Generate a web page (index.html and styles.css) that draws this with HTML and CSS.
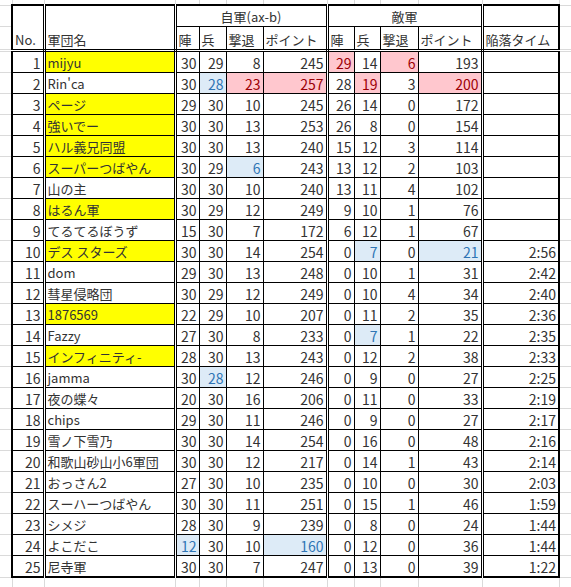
FILE: index.html
```html
<!DOCTYPE html>
<html lang="ja">
<head>
<meta charset="UTF-8">
<title>軍団成績</title>
<link rel="stylesheet" href="styles.css">
</head>
<body>
<table class="sheet">
  <colgroup>
    <col class="w-gap"><col class="w-no"><col class="w-name">
    <col class="w-a"><col class="w-b"><col class="w-c"><col class="w-d">
    <col class="w-e"><col class="w-f"><col class="w-g"><col class="w-h">
    <col class="w-time"><col class="w-gap2">
  </colgroup>
  <tr class="edge-top">
    <td class="gap"></td><td></td><td></td>
    <td></td><td></td><td></td><td></td>
    <td></td><td></td><td></td><td></td>
    <td></td><td class="gap"></td>
  </tr>
  <tr class="head1">
    <td class="gap"></td>
    <td rowspan="2" class="first sep bottom">No.</td>
    <td rowspan="2" class="sep bottom">軍団名</td>
    <td colspan="4" class="center sep">自軍(ax-b)</td>
    <td colspan="4" class="center sep">敵軍</td>
    <td class="last"></td>
    <td class="gap"></td>
  </tr>
  <tr class="head2">
    <td class="gap"></td>
    <td class="bottom">陣</td>
    <td class="bottom">兵</td>
    <td class="bottom">撃退</td>
    <td class="bottom sep">ポイント</td>
    <td class="bottom">陣</td>
    <td class="bottom">兵</td>
    <td class="bottom">撃退</td>
    <td class="bottom sep">ポイント</td>
    <td class="bottom last">陥落タイム</td>
    <td class="gap"></td>
  </tr>
  <tbody id="rows"></tbody>
  <tr class="edge-bottom">
    <td class="gap"></td><td></td><td></td>
    <td></td><td></td><td></td><td></td>
    <td></td><td></td><td></td><td></td>
    <td></td><td class="gap"></td>
  </tr>
</table>

<script>
// name, yellow?, [own 陣 兵 撃退 pt], [enemy 陣 兵 撃退 pt], time
// marks: "r" = red fill, "b" = blue fill
const data = [
  ['mijyu', 1, [30, 29, 8, 245], [29, 14, 6, 193], '', {e0: 'r', e2: 'r'}],
  ["Rin'ca", 0, [30, 28, 23, 257], [28, 19, 3, 200], '', {o1: 'b', o2: 'r', o3: 'r', e1: 'r', e3: 'r'}],
  ['ページ', 1, [29, 30, 10, 245], [26, 14, 0, 172], ''],
  ['強いでー', 1, [30, 30, 13, 253], [26, 8, 0, 154], ''],
  ['ハル義兄同盟', 1, [30, 30, 13, 240], [15, 12, 3, 114], ''],
  ['スーパーつばやん', 1, [30, 29, 6, 243], [13, 12, 2, 103], '', {o2: 'b'}],
  ['山の主', 0, [30, 30, 10, 240], [13, 11, 4, 102], ''],
  ['はるん軍', 1, [30, 29, 12, 249], [9, 10, 1, 76], ''],
  ['てるてるぼうず', 0, [15, 30, 7, 172], [6, 12, 1, 67], ''],
  ['デス スターズ', 1, [30, 30, 14, 254], [0, 7, 0, 21], '2:56', {e1: 'b', e3: 'b'}],
  ['dom', 0, [29, 30, 13, 248], [0, 10, 1, 31], '2:42'],
  ['彗星侵略団', 0, [30, 29, 12, 249], [0, 10, 4, 34], '2:40'],
  ['1876569', 1, [22, 29, 10, 207], [0, 11, 2, 35], '2:36'],
  ['Fazzy', 0, [27, 30, 8, 233], [0, 7, 1, 22], '2:35', {e1: 'b'}],
  ['インフィニティ-', 1, [28, 30, 13, 243], [0, 12, 2, 38], '2:33'],
  ['jamma', 0, [30, 28, 12, 246], [0, 9, 0, 27], '2:25', {o1: 'b'}],
  ['夜の蝶々', 0, [20, 30, 16, 206], [0, 11, 0, 33], '2:19'],
  ['chips', 0, [29, 30, 11, 246], [0, 9, 0, 27], '2:17'],
  ['雪ノ下雪乃', 0, [30, 30, 14, 254], [0, 16, 0, 48], '2:16'],
  ['和歌山砂山小6軍団', 0, [30, 30, 12, 217], [0, 14, 1, 43], '2:14'],
  ['おっさん2', 0, [27, 30, 10, 235], [0, 10, 0, 30], '2:03'],
  ['スーハーつばやん', 0, [30, 30, 11, 251], [0, 15, 1, 46], '1:59'],
  ['シメジ', 0, [28, 30, 9, 239], [0, 8, 0, 24], '1:44'],
  ['よこだこ', 0, [12, 30, 10, 160], [0, 12, 0, 36], '1:44', {o0: 'b', o3: 'b'}],
  ['尼寺軍', 0, [30, 30, 7, 247], [0, 13, 0, 39], '1:22']
];

const body = document.getElementById('rows');

function cell(text, cls) {
  const td = document.createElement('td');
  td.className = cls;
  td.textContent = text;
  return td;
}

data.forEach((row, i) => {
  const [name, yellow, own, enemy, time, marks = {}] = row;
  const tr = document.createElement('tr');
  tr.className = 'data';
  tr.appendChild(cell('', 'gap'));
  tr.appendChild(cell(i + 1, 'num first sep'));
  tr.appendChild(cell(name, 'name sep' + (yellow ? ' yellow' : '')));
  own.forEach((v, j) => {
    let cls = 'num';
    if (j === 3) cls += ' sep';
    if (marks['o' + j] === 'r') cls += ' red';
    if (marks['o' + j] === 'b') cls += ' blue';
    tr.appendChild(cell(v, cls));
  });
  enemy.forEach((v, j) => {
    let cls = 'num';
    if (j === 3) cls += ' sep';
    if (marks['e' + j] === 'r') cls += ' red';
    if (marks['e' + j] === 'b') cls += ' blue';
    tr.appendChild(cell(v, cls));
  });
  tr.appendChild(cell(time, 'num last'));
  tr.appendChild(cell('', 'gap'));
  body.appendChild(tr);
});
</script>
</body>
</html>
```

FILE: styles.css
```css
html, body {
    margin: 0;
    padding: 0;
    background: #ffffff;
}

body {
    font-family: "Noto Sans CJK JP", "Noto Sans", sans-serif;
    font-size: 13px;
    color: #333;
    overflow: hidden;
}

.sheet {
    border-collapse: collapse;
    table-layout: fixed;
    width: 571px;
}

.w-gap { width: 12px; }
.w-no { width: 32px; }
.w-name { width: 131px; }
.w-a { width: 24px; }
.w-b { width: 27px; }
.w-c { width: 37px; }
.w-d { width: 64px; }
.w-e { width: 27px; }
.w-f { width: 26px; }
.w-g { width: 38px; }
.w-h { width: 64px; }
.w-time { width: 77px; }
.w-gap2 { width: 12px; }

.sheet td {
    border: 1px solid #000;
    padding: 0 2px 1px 2px;
    line-height: 17px;
    vertical-align: bottom;
    white-space: nowrap;
    overflow: hidden;
    text-align: left;
}

/* excel gridlines outside the table */
.sheet td.gap,
.edge-top td,
.edge-bottom td {
    border-color: #dadada;
}

.edge-top td {
    height: 4px;
    padding: 0;
    border-top: none;
    border-bottom: 2px solid #000;
}

.edge-top td.gap {
    border-bottom: 1px solid #dadada;
}

.edge-bottom td {
    height: 10px;
    padding: 0;
    border-top: 2px solid #000;
    border-bottom: none;
}

.edge-bottom td.gap {
    border-top: 1px solid #dadada;
}

.gap {
    border-left: none !important;
}

.head1 td {
    height: 19px;
}

.head2 td {
    height: 21px;
}

.head2 td,
.head1 td.bottom {
    border-bottom: 3px double #000;
}

.data td {
    height: 20px;
    line-height: 18px;
    padding-bottom: 0;
}

.sheet td.first {
    border-left: 2px solid #000;
}

.sheet td.last {
    border-right: 2px solid #000;
}

.sheet td.sep {
    border-right: 3px double #000;
}

.center {
    text-align: center !important;
}

.num {
    font-size: 14px;
    text-align: right !important;
}

.name {
    padding-left: 3px;
}

.yellow {
    background: #ffff00;
}

.red {
    background: #ffc7ce;
    color: #9c0006;
}

.blue {
    background: #ddebf7;
    color: #2f75b5;
}
```
